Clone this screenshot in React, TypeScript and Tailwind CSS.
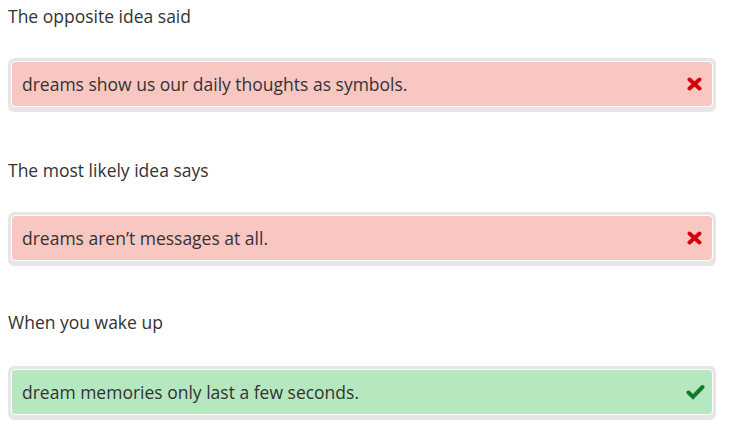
import React from "react";

type Item = {
    label: string;
    answer: string;
    correct: boolean;
};

const items: Item[] = [
    { label: "The opposite idea said", answer: "dreams show us our daily thoughts as symbols.", correct: false },
    { label: "The most likely idea says", answer: "dreams aren\u2019t messages at all.", correct: false },
    { label: "When you wake up", answer: "dream memories only last a few seconds.", correct: true },
];

const CrossIcon = () => (
    <svg width="15" height="14" viewBox="0 0 15 14" className="text-[#d7000f]">
        <path d="M2.5 2.5 L12.5 11.5 M12.5 2.5 L2.5 11.5" stroke="currentColor" strokeWidth="4" strokeLinecap="round" fill="none" />
    </svg>
);

const CheckIcon = () => (
    <svg width="19" height="16" viewBox="0 0 19 16" className="text-[#137a2b]">
        <path d="M2.5 8.5 L7 13 L16.5 3" stroke="currentColor" strokeWidth="4" strokeLinecap="round" strokeLinejoin="miter" fill="none" />
    </svg>
);

const AnswerBox = ({ answer, correct }: { answer: string; correct: boolean }) => (
    <div className="rounded-md bg-[#e6e6e6] p-[3px] pb-[5px]">
        <div
            className={`flex h-[46px] items-center justify-between rounded border border-white pl-[10px] ${
                correct ? "bg-[#b6e8c0] pr-[7px]" : "bg-[#f9c7c2] pr-[10px]"
            }`}
        >
            <span className="pt-px text-[17.5px] text-[#333333]">{answer}</span>
            {correct ? <CheckIcon /> : <CrossIcon />}
        </div>
    </div>
);

export default function App() {
    return (
        <div
            className="flex w-[729px] flex-col bg-white pl-2 pr-[13px] pt-1"
            style={{ fontFamily: '"Open Sans", sans-serif' }}
        >
            {items.map((item, i) => (
                <div key={i} className={i === 1 ? "mt-[46px]" : i === 2 ? "mt-[44px]" : ""}>
                    <div className="text-[17.5px] leading-6 text-[#333333]">{item.label}</div>
                    <div className={i === 2 ? "mt-[32px]" : "mt-[30px]"}>
                        <AnswerBox answer={item.answer} correct={item.correct} />
                    </div>
                </div>
            ))}
        </div>
    );
}
